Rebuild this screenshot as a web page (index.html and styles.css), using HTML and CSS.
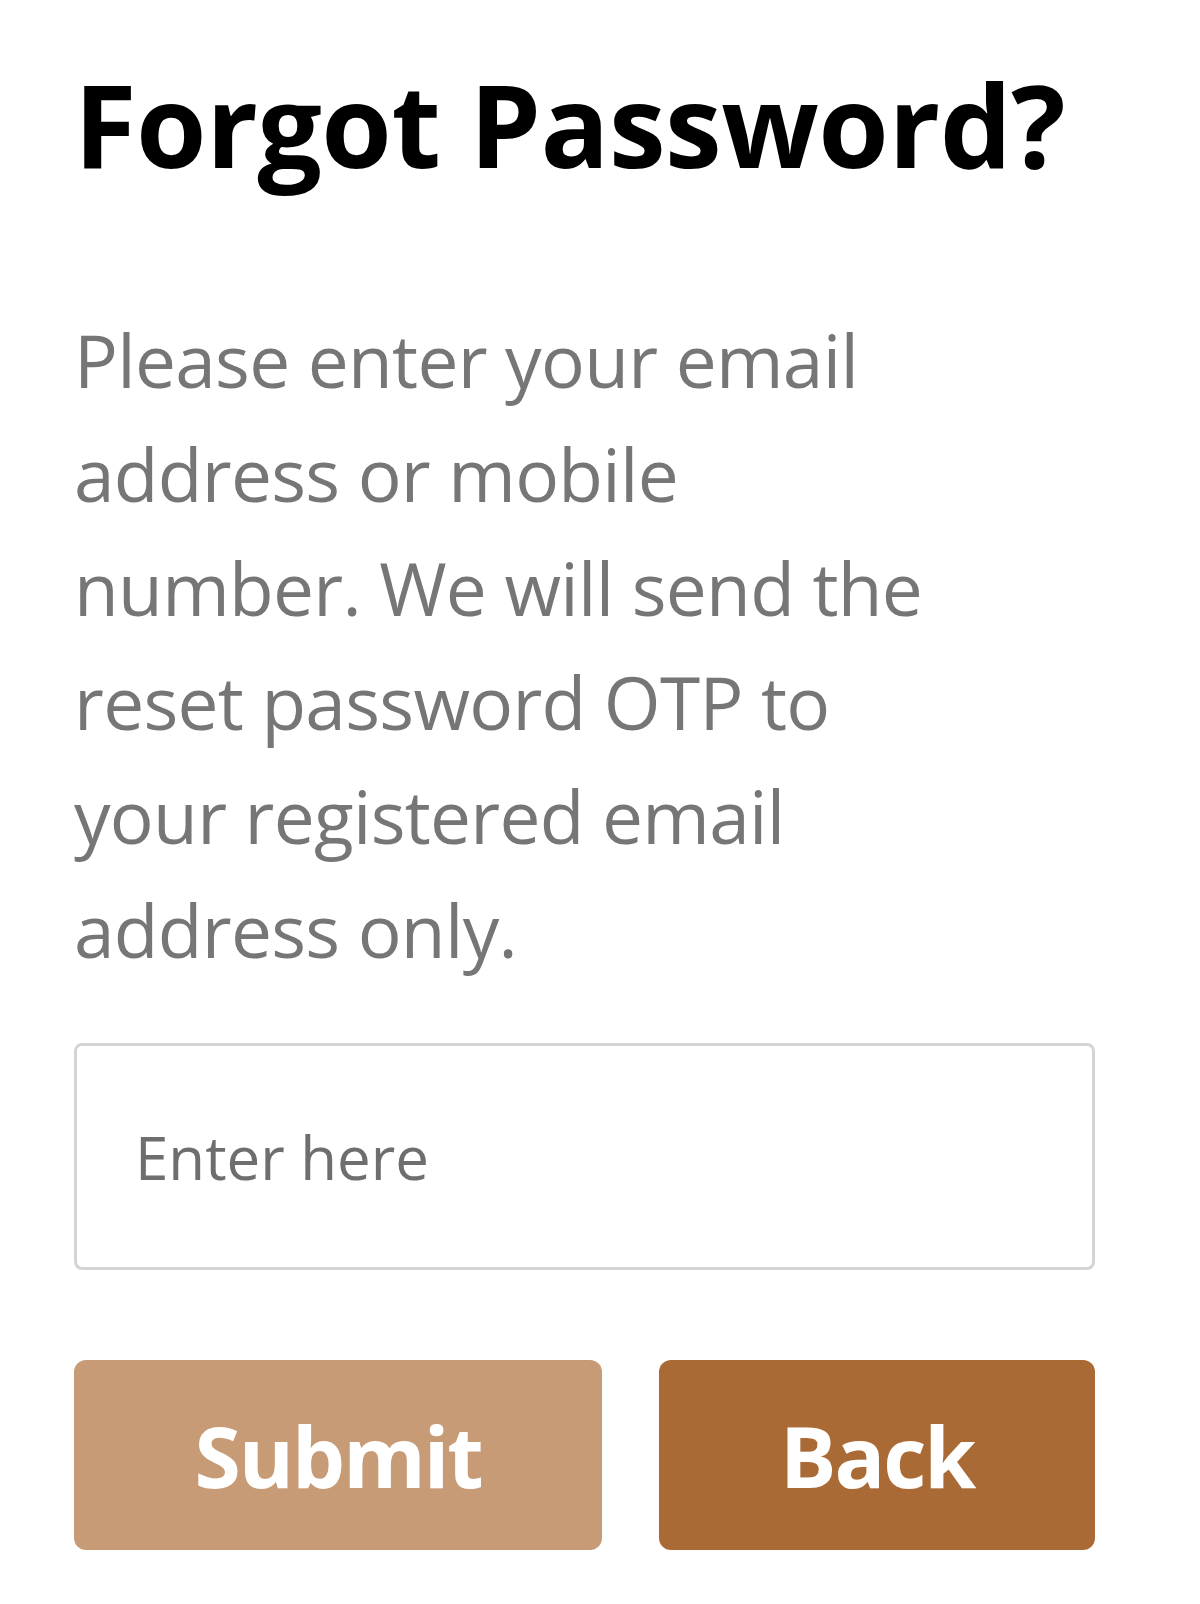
FILE: index.html
```html
<!DOCTYPE html>
<html lang="en">
<head>
<meta charset="utf-8">
<title>Forgot Password</title>
<link rel="stylesheet" href="styles.css">
</head>
<body>
<main class="card">
  <h1 class="title">Forgot Password?</h1>
  <p class="desc">Please enter your email<br>address or mobile<br>number. We will send the<br>reset password OTP to<br>your registered email<br>address only.</p>
  <input class="field" type="text" placeholder="Enter here">
  <div class="actions">
    <button class="btn btn-submit" type="button">Submit</button>
    <button class="btn btn-back" type="button">Back</button>
  </div>
</main>
</body>
</html>
```
FILE: styles.css
```css
html, body {
  margin: 0;
  padding: 0;
  background: #ffffff;
}
body {
  font-family: "Open Sans", "Noto Sans", sans-serif;
}
.card {
  width: 1021px;
  padding: 49px 0 0 74px;
  display: flex;
  flex-direction: column;
}
.title {
  margin: 0;
  font-size: 114px;
  font-weight: 700;
  line-height: 150px;
  color: #000;
  letter-spacing: -0.5px;
}
.desc {
  margin: 104px 0 0 0;
  font-size: 73px;
  line-height: 114px;
  color: #767676;
  letter-spacing: -0.7px;
}
.field {
  box-sizing: border-box;
  margin-top: 56px;
  width: 1021px;
  height: 227px;
  border: 3px solid #d4d4d4;
  border-radius: 8px;
  padding: 0 0 0 58px;
  font-family: "Open Sans", "Noto Sans", sans-serif;
  font-size: 60px;
  color: #333;
  outline: none;
}
.field::placeholder {
  color: #6e6e6e;
}
.actions {
  display: flex;
  gap: 57px;
  margin-top: 90px;
}
.btn {
  flex: 1 1 auto;
  height: 190px;
  border: none;
  border-radius: 12px;
  color: #fff;
  font-family: "Open Sans", "Noto Sans", sans-serif;
  font-size: 84px;
  font-weight: 700;
  letter-spacing: -2px;
  padding: 0;
}
.btn-submit {
  background: #c89b77;
}
.btn-back {
  background: #aa6a35;
}
```
